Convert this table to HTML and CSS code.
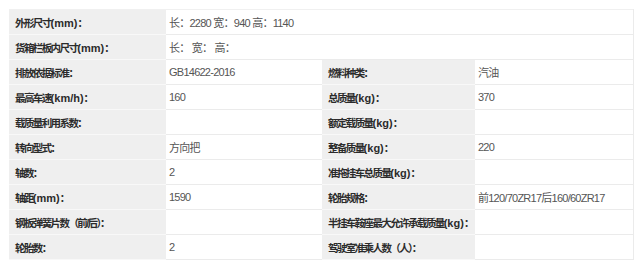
FILE: index.html
```html
<!DOCTYPE html>
<html lang="zh-CN">
<head>
  <meta charset="UTF-8" />
  <title>车辆参数</title>
  <link rel="stylesheet" href="styles.css">
</head>
<body>
  <table class="spec">
    <colgroup>
      <col class="c1"><col class="c2"><col class="c3"><col class="c4">
    </colgroup>
    <tr>
      <th>外形尺寸<span class="u">(mm)</span>：</th>
      <td colspan="3">长：2280 宽：940 高：1140</td>
    </tr>
    <tr>
      <th>货箱栏板内尺寸<span class="u">(mm)</span>：</th>
      <td colspan="3">长： 宽： 高：</td>
    </tr>
    <tr>
      <th>排放依据标准：</th>
      <td>GB14622-2016</td>
      <th>燃料种类：</th>
      <td>汽油</td>
    </tr>
    <tr>
      <th>最高车速<span class="u">(km/h)</span>：</th>
      <td>160</td>
      <th>总质量<span class="u">(kg)</span>：</th>
      <td>370</td>
    </tr>
    <tr>
      <th>载质量利用系数：</th>
      <td></td>
      <th>额定载质量<span class="u">(kg)</span>：</th>
      <td></td>
    </tr>
    <tr>
      <th>转向型式：</th>
      <td>方向把</td>
      <th>整备质量<span class="u">(kg)</span>：</th>
      <td>220</td>
    </tr>
    <tr>
      <th>轴数：</th>
      <td>2</td>
      <th>准拖挂车总质量<span class="u">(kg)</span>：</th>
      <td></td>
    </tr>
    <tr>
      <th>轴距<span class="u">(mm)</span>：</th>
      <td>1590</td>
      <th>轮胎规格：</th>
      <td>前120/70ZR17后160/60ZR17</td>
    </tr>
    <tr>
      <th>钢板弹簧片数（前/后）：</th>
      <td></td>
      <th>半挂车鞍座最大允许承载质量<span class="u">(kg)</span>：</th>
      <td></td>
    </tr>
    <tr>
      <th>轮胎数：</th>
      <td>2</td>
      <th>驾驶室准乘人数（人）：</th>
      <td></td>
    </tr>
  </table>
</body>
</html>
```

FILE: styles.css
```css
body {
  margin: 0;
  padding: 9px 7px 0 9px;
  background: #fff;
  font-family: "Liberation Sans", "Noto Sans CJK SC", sans-serif;
  font-size: 11px;
  color: #333;
}
.spec {
  width: 624px;
  border-collapse: collapse;
  table-layout: fixed;
  border-top: 1px solid #f0f0f0;
  border-right: 1px solid #ebebeb;
}
.c1 { width: 157px; }
.c2 { width: 156px; }
.c3 { width: 153px; }
.c4 { width: 158px; }
.spec th,
.spec td {
  height: 24px;
  padding: 0 0 0 6px;
  text-align: left;
  white-space: nowrap;
  overflow: hidden;
}
.spec th {
  background: #efefef;
  font-size: 10.5px;
  font-weight: bold;
  color: #2b2b2b;
  letter-spacing: -1.6px;
  border-bottom: 1px solid #f8f8f8;
}
.spec th .u {
  font-size: 11px;
  letter-spacing: 0;
}
.spec td {
  background: #fff;
  color: #555;
  letter-spacing: -0.75px;
  border-bottom: 1px solid #ebebeb;
  padding-left: 3px;
}
```
